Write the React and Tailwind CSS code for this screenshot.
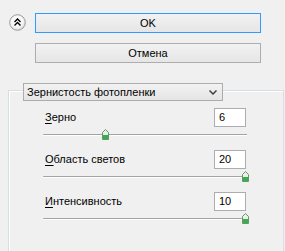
import React from 'react';

function CollapseIcon() {
  return (
    <svg width="17" height="17" viewBox="0 0 17 17">
      <defs>
        <radialGradient id="cg" cx="0.45" cy="0.4" r="0.6">
          <stop offset="0" stopColor="#ffffff" />
          <stop offset="0.7" stopColor="#f4f4f4" />
          <stop offset="1" stopColor="#d6d6d6" />
        </radialGradient>
      </defs>
      <circle cx="8.5" cy="8.5" r="7.8" fill="url(#cg)" stroke="#9a9a9a" strokeWidth="1" />
      <path d="M5.5 8 L8.5 5 L11.5 8 M5.5 11.5 L8.5 8.5 L11.5 11.5" fill="none" stroke="#000" strokeWidth="1.4" />
    </svg>
  );
}

function Thumb() {
  return (
    <svg width="7" height="11" viewBox="0 0 7 11">
      <path d="M3.5 0.5 L6.5 3.5 L6.5 10.5 L0.5 10.5 L0.5 3.5 Z" fill="#e8f0e8" stroke="#6f8f6f" strokeWidth="1" />
      <rect x="1" y="6" width="5" height="4" fill="#2fb34a" />
    </svg>
  );
}

function Slider({ pos }) {
  return (
    <div className="relative h-[13px] w-[204px] mt-[1px]">
      <div className="absolute left-0 right-0 top-[6px] h-[2px] border-t border-[#a3a3a3] border-b border-b-white rounded-l-[1px]" />
      <div className="absolute top-[1px]" style={{ left: pos }}>
        <Thumb />
      </div>
    </div>
  );
}

function Row({ first, rest, value, pos }) {
  return (
    <div className="mb-[9px]">
      <div className="flex items-center justify-between h-[19px] w-[204px] pl-[2px] pr-[1px]">
        <span>
          <span className="underline underline-offset-[2px]">{first}</span>
          {rest}
        </span>
        <div className="w-[32px] h-[19px] bg-white border border-[#abadb3] pl-[4px] leading-[17px]">{value}</div>
      </div>
      <Slider pos={pos} />
    </div>
  );
}

export default function App() {
  return (
    <div
      className="w-[285px] h-[251px] bg-[#f0f0f0] overflow-hidden text-[11px] text-black"
      style={{ fontFamily: '"Liberation Sans", Arial, sans-serif' }}
    >
      <div className="flex pt-[13px] pl-[9px]">
        <div className="mt-[1px]">
          <CollapseIcon />
        </div>
        <div className="ml-[9px] flex flex-col gap-[10px]">
          <button className="w-[226px] h-[20px] border border-[#3399ff] bg-gradient-to-b from-[#f2f2f2] to-[#e6e6e6] text-[11px] leading-[18px]">
            OK
          </button>
          <button className="w-[226px] h-[20px] border border-[#adadad] bg-gradient-to-b from-[#f2f2f2] to-[#e6e6e6] text-[11px] leading-[18px]">
            Отмена
          </button>
        </div>
      </div>

      <div className="ml-[8px] mt-[27px] w-[276px] h-[200px] border border-[#d5dfe5] border-b-0 shadow-[inset_1px_1px_0_#ffffff]">
        <div className="-mt-[8px] ml-[14px] w-[200px] h-[18px] border border-[#acacac] bg-gradient-to-b from-[#f2f2f2] to-[#e5e5e5] flex items-center justify-between pl-[3px] pr-[5px]">
          <span>Зернистость фотопленки</span>
          <svg width="8" height="5" viewBox="0 0 8 5">
            <path d="M0.5 0.5 L4 4 L7.5 0.5" fill="none" stroke="#404040" strokeWidth="1.5" />
          </svg>
        </div>
        <div className="pl-[34px] pt-[7px]">
          <Row first="З" rest="ерно" value="6" pos={59} />
          <Row first="О" rest="бласть светов" value="20" pos={199} />
          <Row first="И" rest="нтенсивность" value="10" pos={199} />
        </div>
      </div>
    </div>
  );
}
